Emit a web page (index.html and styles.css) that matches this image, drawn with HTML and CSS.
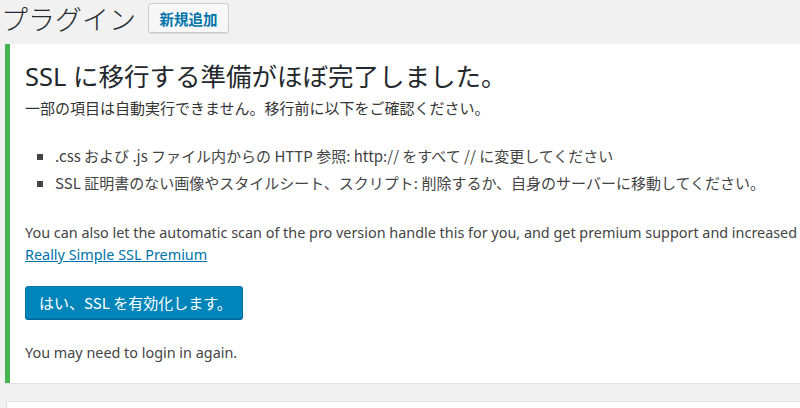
FILE: index.html
```html
<!DOCTYPE html>
<html lang="ja">
<head>
<meta charset="utf-8">
<link rel="stylesheet" href="styles.css">
</head>
<body>
<div class="wrap">
  <div class="page-head">
    <h1 class="page-title">プラグイン</h1>
    <a class="add-new">新規追加</a>
  </div>
  <div class="notice">
    <h2 class="notice-title">SSL に移行する準備がほぼ完了しました。</h2>
    <p class="notice-sub">一部の項目は自動実行できません。移行前に以下をご確認ください。</p>
    <ul class="notice-list">
      <li>.css および .js ファイル内からの HTTP 参照: http:// をすべて // に変更してください</li>
      <li>SSL 証明書のない画像やスタイルシート、スクリプト: 削除するか、自身のサーバーに移動してください。</li>
    </ul>
    <p class="notice-text">You can also let the automatic scan of the pro version handle this for you, and get premium support and increased security.<br><a class="notice-link">Really Simple SSL Premium</a></p>
    <div class="notice-action"><a class="primary-btn">はい、SSL を有効化します。</a></div>
    <p class="notice-text notice-last">You may need to login in again.</p>
  </div>
  <div class="next-box"></div>
</div>
</body>
</html>
```
FILE: styles.css
```css
html, body {
  margin: 0;
  padding: 0;
  background: #f1f1f1;
  overflow: hidden;
  width: 800px;
  height: 408px;
}
.wrap {
  width: 1200px;
  font-family: "Noto Sans", "Noto Sans CJK JP", sans-serif;
  color: #444;
}
.page-head {
  display: flex;
  align-items: flex-start;
  height: 44px;
}
.page-title {
  margin: 0;
  padding: 0 0 0 1px;
  font-family: "Noto Sans CJK JP", sans-serif;
  font-weight: 300;
  font-size: 27px;
  line-height: 38px;
  color: #23282d;
}
.add-new {
  margin: 3px 0 0 12px;
  box-sizing: border-box;
  width: 81px;
  height: 30px;
  display: flex;
  align-items: center;
  justify-content: center;
  background: #f7f7f7;
  border: 1px solid #ccc;
  border-radius: 3px;
  box-shadow: 0 1px 0 #ddd;
  color: #0073aa;
  font-family: "Noto Sans CJK JP", sans-serif;
  font-weight: 700;
  font-size: 14.5px;
}
.notice {
  margin-left: 5px;
  background: #fff;
  border-left: 5px solid #46b450;
  box-shadow: 0 1px 1px rgba(0,0,0,.06);
  padding: 14px 0 1px 15px;
  height: 339px;
  box-sizing: border-box;
}
.notice-title {
  margin: 0;
  font-family: "Noto Sans", "Noto Sans CJK JP", sans-serif;
  font-weight: 400;
  font-size: 25.5px;
  line-height: 36px;
  color: #23282d;
}
.notice-sub {
  margin: 2px 0 0;
  font-family: "Noto Sans CJK JP", sans-serif;
  font-size: 15px;
  line-height: 24px;
  color: #333;
}
.notice-list {
  margin: 22px 0 0;
  padding: 0 0 0 30px;
  list-style: square;
  font-family: "Noto Sans CJK JP", sans-serif;
  font-size: 15px;
  line-height: 27px;
  color: #444;
}
.notice-text {
  margin: 26px 0 0;
  font-size: 14.4px;
  line-height: 22px;
  color: #444;
}
.notice-link {
  color: #0073aa;
  text-decoration: underline;
}
.notice-action {
  margin-top: 20px;
}
.primary-btn {
  display: inline-flex;
  align-items: center;
  box-sizing: border-box;
  width: 218px;
  height: 33px;
  padding: 0 0 0 13px;
  background: #0085ba;
  border: 1px solid #0073aa;
  border-radius: 3px;
  box-shadow: 0 1px 0 #006799;
  color: #fff;
  font-family: "Noto Sans CJK JP", sans-serif;
  font-size: 15px;
}
.notice-last {
  margin-top: 23px;
}
.next-box {
  margin: 18px 0 0 6px;
  height: 40px;
  background: #fff;
  border: 1px solid #e0e0e0;
}
```
